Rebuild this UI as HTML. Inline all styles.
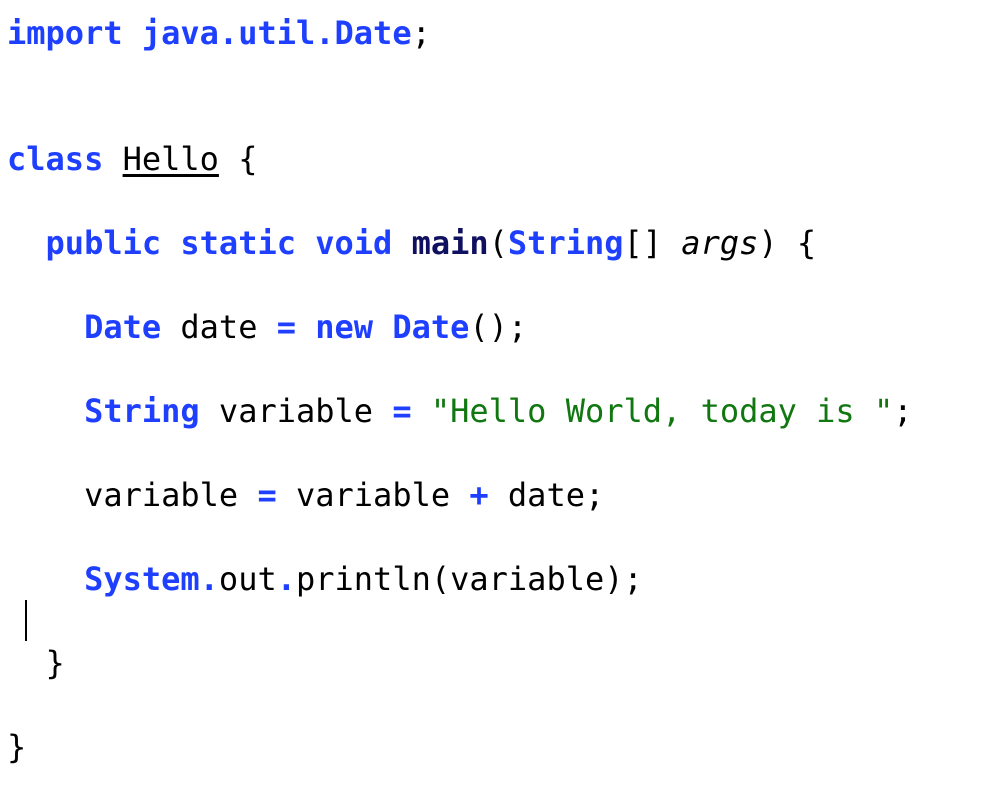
<!DOCTYPE html>
<html><head><meta charset="utf-8"><style>
html,body{margin:0;background:#fff;width:1002px;height:792px;overflow:hidden;}
pre{margin:0;padding:12px 0 0 7px;font-family:"DejaVu Sans Mono","Liberation Mono",monospace;font-size:32px;line-height:42px;color:#000;}
.k{color:#1f3fff;font-weight:bold}
.o{color:#1f3fff;font-weight:bold}
.s{color:#117711}
.m{color:#101060;font-weight:bold}
i{font-style:italic}
u{text-decoration:underline;text-underline-offset:4px}
.cur{position:absolute;left:25px;top:600px;width:2px;height:41px;background:#000}
</style></head><body>
<pre><span class="k">import java.util.Date</span>;


<span class="k">class</span> <u>Hello</u> {

  <span class="k">public static void</span> <span class="m">main</span>(<span class="k">String</span>[] <i>args</i>) {

    <span class="k">Date</span> date <span class="o">=</span> <span class="k">new Date</span>();

    <span class="k">String</span> variable <span class="o">=</span> <span class="s">"Hello World, today is "</span>;

    variable <span class="o">=</span> variable <span class="o">+</span> date;

    <span class="k">System</span><span class="o">.</span>out<span class="o">.</span>println(variable);

  }

}</pre>
<div class="cur"></div>
</body></html>
